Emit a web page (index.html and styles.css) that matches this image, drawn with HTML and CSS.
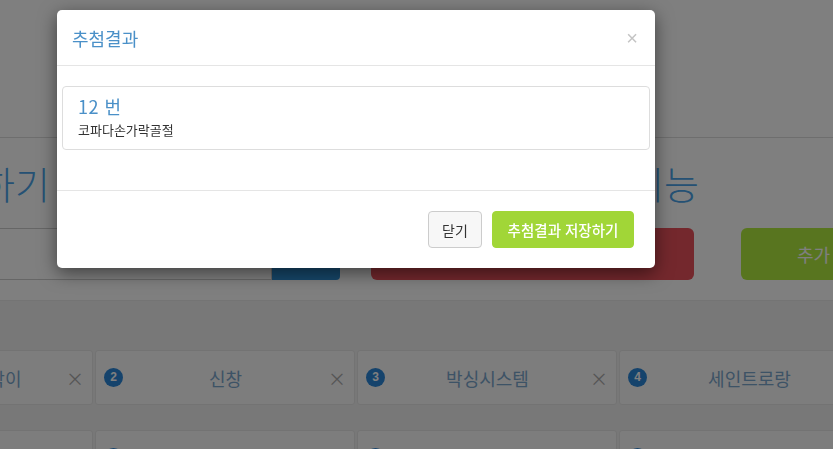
FILE: index.html
```html
<!DOCTYPE html>
<html lang="ko">
<head>
  <meta charset="utf-8">
  <title>추첨결과</title>
  <link rel="stylesheet" href="styles.css">
</head>
<body>

<div class="page">
  <div class="top"></div>

  <div class="headings">
    <h1 class="head head-left">추첨하기</h1>
    <h1 class="head head-right">추첨 기능</h1>
  </div>

  <div class="controls">
    <div class="search">
      <input class="search-input" type="text">
      <button class="btn-search"></button>
    </div>
    <button class="btn-big btn-red"></button>
    <button class="btn-big btn-green">추가</button>
  </div>

  <div class="board">
    <div class="cards">
      <div class="card"><span class="badge">1</span><span class="name">코파다손가락이</span><span class="remove">&times;</span></div>
      <div class="card"><span class="badge">2</span><span class="name">신창</span><span class="remove">&times;</span></div>
      <div class="card"><span class="badge">3</span><span class="name">박싱시스템</span><span class="remove">&times;</span></div>
      <div class="card"><span class="badge">4</span><span class="name">세인트로랑</span><span class="remove">&times;</span></div>
    </div>
    <div class="cards">
      <div class="card"><span class="badge">5</span><span class="name">대한상사</span><span class="remove">&times;</span></div>
      <div class="card"><span class="badge">6</span><span class="name">한빛전자</span><span class="remove">&times;</span></div>
      <div class="card"><span class="badge">7</span><span class="name">미래물산</span><span class="remove">&times;</span></div>
      <div class="card"><span class="badge">8</span><span class="name">코파다손가락골절</span><span class="remove">&times;</span></div>
    </div>
  </div>
</div>

<div class="backdrop"></div>

<div class="modal">
  <div class="modal-content">
    <div class="modal-header">
      <h4 class="modal-title">추첨결과</h4>
      <span class="close">&times;</span>
    </div>
    <div class="modal-body">
      <div class="result">
        <div class="result-num">12 번</div>
        <div class="result-name">코파다손가락골절</div>
      </div>
    </div>
    <div class="modal-footer">
      <button class="btn btn-default">닫기</button>
      <button class="btn btn-save">추첨결과 저장하기</button>
    </div>
  </div>
</div>

</body>
</html>
```

FILE: styles.css
```css
body {
    margin: 0;
    font-family: "Noto Sans CJK KR", "Noto Sans", sans-serif;
    background: #fff;
    overflow: hidden;
}

/* ---- page behind the dialog ---- */
.page {
    width: 833px;
}
.top {
    height: 137px;
    border-bottom: 1px solid #ddd;
}
.headings {
    display: flex;
    height: 90px;
}
.head {
    margin: 0;
    font-size: 38px;
    font-weight: 300;
    color: #4aa3e8;
    line-height: 90px;
    white-space: nowrap;
    flex-shrink: 0;
}
.head-left {
    width: 50px;
    display: flex;
    justify-content: flex-end;
}
.head-right {
    width: 649px;
    display: flex;
    justify-content: flex-end;
}

.controls {
    display: flex;
    height: 52px;
    align-items: stretch;
}
.controls > * {
    flex-shrink: 0;
}
.search {
    display: flex;
    width: 340px;
}
.search-input {
    width: 272px;
    box-sizing: border-box;
    border: 1px solid #ccc;
    border-left: none;
    margin: 0;
    background: #fff;
}
.btn-search {
    width: 68px;
    border: none;
    background: #2d8fd5;
    border-radius: 0 4px 4px 0;
    margin: 0;
}
.btn-big {
    border: none;
    border-radius: 6px;
    color: #fff;
    font-family: inherit;
    font-size: 18px;
}
.btn-red {
    width: 323px;
    margin-left: 31px;
    background: #e8505a;
}
.btn-green {
    width: 130px;
    margin-left: 47px;
    background: #b0ea3e;
    text-align: left;
    padding-left: 56px;
}

.board {
    margin-top: 20px;
    border-top: 1px solid #e8e8e8;
    background: #f1f1f1;
    padding-top: 49px;
    height: 200px;
}
.cards {
    display: flex;
    gap: 2px;
    margin-left: -167px;
    margin-bottom: 25px;
}
.card {
    flex: 0 0 260px;
    height: 55px;
    box-sizing: border-box;
    border: 1px solid #e6e6e6;
    border-radius: 3px;
    background: #fafafa;
    display: flex;
    align-items: center;
    padding: 0 8px 0 8px;
}
.badge {
    width: 19px;
    height: 19px;
    border-radius: 50%;
    background: #2a86d8;
    color: #fff;
    font-family: "Liberation Sans", sans-serif;
    font-size: 12px;
    font-weight: bold;
    line-height: 19px;
    text-align: center;
}
.name {
    flex: 1;
    text-align: center;
    font-size: 18px;
    color: #7aa6cc;
}
.remove {
    color: #aaa;
    font-size: 18px;
}

/* ---- dialog ---- */
.backdrop {
    position: fixed;
    left: 0;
    top: 0;
    right: 0;
    bottom: 0;
    background: rgba(0, 0, 0, 0.5);
}
.modal {
    position: fixed;
    left: 57px;
    top: 10px;
    width: 598px;
}
.modal-content {
    background: #fff;
    border-radius: 5px;
    box-shadow: 0 5px 18px rgba(0, 0, 0, 0.5);
    overflow: hidden;
}
.modal-header {
    height: 56px;
    box-sizing: border-box;
    border-bottom: 1px solid #e5e5e5;
    display: flex;
    align-items: center;
    justify-content: space-between;
    padding: 0 17px 0 15px;
}
.modal-title {
    margin: 0;
    font-size: 18px;
    font-weight: normal;
    color: #4a90c8;
}
.close {
    color: #c4c4c4;
    font-family: "Liberation Sans", sans-serif;
    font-size: 20px;
    margin-top: 2px;
}
.modal-body {
    padding: 20px 5px 40px;
}
.result {
    height: 64px;
    box-sizing: border-box;
    border: 1px solid #ddd;
    border-radius: 4px;
    padding: 5px 15px 0;
}
.result-num {
    font-size: 18px;
    color: #4a90c8;
    line-height: 28px;
    letter-spacing: 0.5px;
}
.result-name {
    font-size: 13px;
    color: #333;
    line-height: 20px;
}
.modal-footer {
    border-top: 1px solid #e5e5e5;
    padding: 20px 21px 20px;
    display: flex;
    justify-content: flex-end;
    gap: 10px;
}
.btn {
    height: 37px;
    border-radius: 4px;
    font-family: inherit;
    font-size: 14px;
    padding: 0 10px;
    margin: 0;
}
.btn-default {
    width: 54px;
    background: #f7f7f7;
    border: 1px solid #ccc;
    color: #333;
}
.btn-save {
    width: 142px;
    background: #a1d637;
    border: 1px solid #a1d637;
    color: #fff;
    font-size: 14.5px;
    font-weight: 500;
}
```
